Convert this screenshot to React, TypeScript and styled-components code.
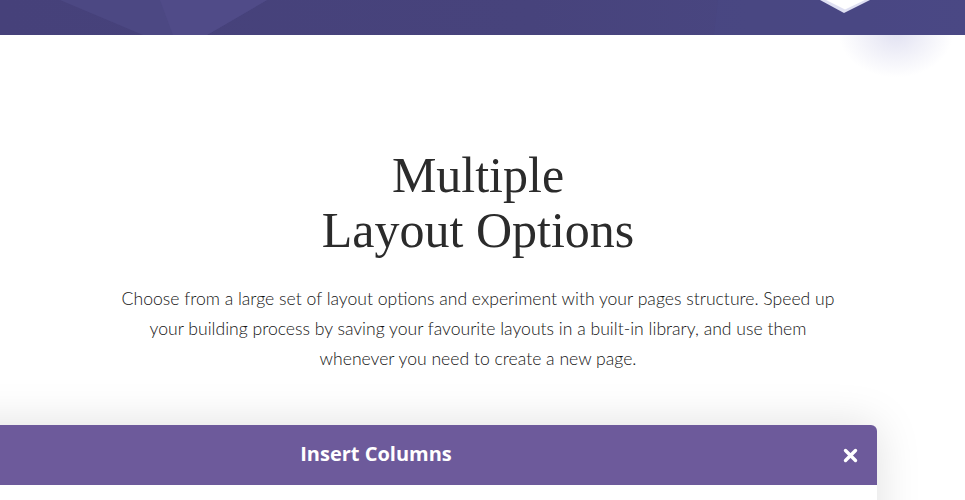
import React, { FC } from 'react';
import styled, { createGlobalStyle } from 'styled-components';

const GlobalStyle = createGlobalStyle`
	html, body {
		margin: 0;
		padding: 0;
		background: #ffffff;
		overflow: hidden;
	}
	* {
		box-sizing: border-box;
	}
`;

const Page = styled.div`
	position: relative;
	width: 965px;
	height: 500px;
	overflow: hidden;
	background: #ffffff;
`;

const Banner = styled.header`
	position: relative;
	height: 35px;
	background: linear-gradient(90deg, #46417a 0%, #47437c 55%, #4b4985 100%);
	overflow: hidden;
`;

const BannerShapes = styled.svg`
	position: absolute;
	inset: 0;
	width: 100%;
	height: 100%;
`;

const Glow = styled.div`
	position: absolute;
	top: -12px;
	left: 838px;
	width: 116px;
	height: 90px;
	border-radius: 50%;
	background: radial-gradient(ellipse at 50% 50%, rgba(110, 110, 190, 0.2) 0%, rgba(110, 110, 190, 0.07) 45%, rgba(110, 110, 190, 0) 70%);
	pointer-events: none;
`;

const Section = styled.section`
	display: flex;
	flex-direction: column;
	align-items: center;
	padding: 113px 9px 0 0;
`;

const Title = styled.h2`
	margin: 0;
	font-family: 'Liberation Serif', 'Times New Roman', serif;
	font-weight: 400;
	font-size: 50px;
	line-height: 55px;
	color: #2b2b2b;
	text-align: center;
`;

const Lead = styled.p`
	margin: 26px 0 0;
	width: 718px;
	font-family: Lato, 'Open Sans', sans-serif;
	font-weight: 300;
	font-size: 17.6px;
	line-height: 30px;
	color: #151515;
	text-align: center;
`;

const Modal = styled.div`
	align-self: flex-start;
	margin: 51px 0 0 -125px;
	width: 1002px;
	background: #ffffff;
	border-radius: 6px 6px 0 0;
	box-shadow: 0 0 45px rgba(0, 0, 0, 0.13);
`;

const ModalHeader = styled.div`
	position: relative;
	display: flex;
	align-items: center;
	justify-content: center;
	height: 60px;
	padding-bottom: 4px;
	background: #6d5a9b;
	border-radius: 6px 6px 0 0;
`;

const ModalTitle = styled.span`
	font-family: 'Open Sans', sans-serif;
	font-weight: 700;
	font-size: 20px;
	color: #ffffff;
`;

const CloseButton = styled.button`
	position: absolute;
	right: 19px;
	top: 22px;
	display: flex;
	align-items: center;
	justify-content: center;
	width: 16px;
	height: 16px;
	padding: 0;
	border: 0;
	background: none;
	cursor: pointer;
`;

const ModalBody = styled.div`
	height: 120px;
`;

const App: FC = () => {
	return (
		<>
			<GlobalStyle />
			<Page>
				<Glow />
				<Banner>
					<BannerShapes viewBox="0 0 965 35" preserveAspectRatio="none">
						<polygon points="60,0 267,0 207,35 143,35" fill="#4c4883" />
						<polygon points="160,0 267,0 207,35 173,35" fill="#504b88" />
						<polygon points="718,0 965,0 965,35 714,35" fill="#4a4784" opacity="0.6" />
						<polygon points="820,0 870,0 844,13" fill="#dfe0f2" />
						<polygon points="826,0 865,0 845,9.5" fill="#ffffff" />
					</BannerShapes>
				</Banner>
				<Section>
					<Title>
						Multiple
						<br />
						Layout Options
					</Title>
					<Lead>
						Choose from a large set of layout options and experiment with your pages structure. Speed up your building
						process by saving your favourite layouts in a built-in library, and use them whenever you need to create a new
						page.
					</Lead>
					<Modal>
						<ModalHeader>
							<ModalTitle>Insert Columns</ModalTitle>
							<CloseButton aria-label="Close">
								<svg width="15" height="15" viewBox="0 0 15 15">
									<path d="M2.5 2.5 L12.5 12.5 M12.5 2.5 L2.5 12.5" stroke="#ffffff" strokeWidth="3.4" strokeLinecap="round" />
								</svg>
							</CloseButton>
						</ModalHeader>
						<ModalBody />
					</Modal>
				</Section>
			</Page>
		</>
	);
};

export default App;
